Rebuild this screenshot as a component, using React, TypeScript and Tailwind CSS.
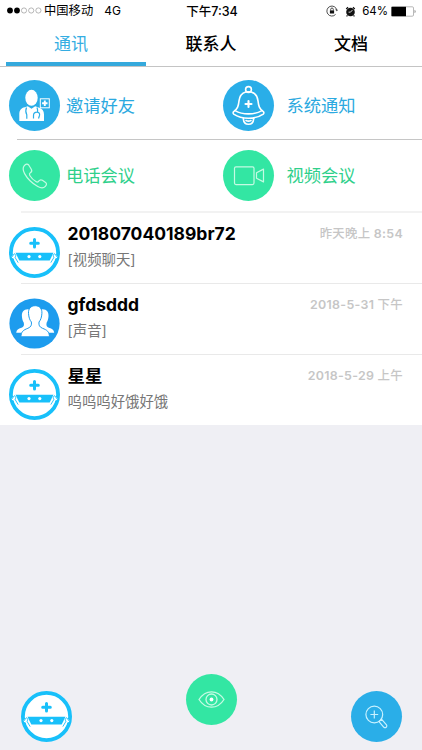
import type { ReactNode } from "react";

const tabs = [
  { label: "通讯", active: true },
  { label: "联系人", active: false },
  { label: "文档", active: false },
];

function DoctorIcon() {
  return (
    <svg viewBox="0 0 51 51" className="size-[51px]" fill="none">
      <ellipse cx="22.500" cy="17.800" rx="6.200" ry="8" fill="#fff" />
      <path
        d="M10.300 41v-6.500c0-4.500 2-6.500 5.500-7.300l3-1 3.700 2.500 3.700-2.500 3.500 1.200c3.500.9 5.300 3.200 5.300 7.200V41z"
        fill="#fff"
      />
      <path
        d="M17.500 27.500c-1 2.500-1 5 .3 7.200v4M28 27.500c.8 1.800.8 3.300.3 5M24.500 38.500v-3c0-2 1.500-3.300 3.500-3.300s3 1.600 2.500 3.300l-1 3"
        stroke="#2aaee8"
        strokeWidth="1.200"
      />
      <rect x="31.300" y="18.800" width="9" height="9" stroke="#fff" strokeWidth="1" />
      <path d="M35.800 20.600v5.400M33.100 23.300h5.400" stroke="#fff" strokeWidth="1.900" />
    </svg>
  );
}

function BellIcon() {
  return (
    <svg
      viewBox="0 0 51 51"
      className="size-[51px]"
      fill="none"
      stroke="#fff"
      strokeWidth="1.600"
      strokeLinejoin="round"
      strokeLinecap="round"
    >
      <circle cx="25.500" cy="9.500" r="2.900" />
      <path d="M22.800 11.900c-4.300 1.200-6.300 4.600-6.800 9-.6 5.300-1.300 7.700-5.300 10.700-.8.600-.8 1.900 0 2.500 4.300 2.900 9.300 4.100 14.800 4.100s10.500-1.200 14.800-4.100c.8-.6.8-1.900 0-2.500-4-3-4.700-5.400-5.300-10.700-.5-4.400-2.500-7.800-6.800-9z" />
      <path d="M12 30.600c4 2.300 8.500 3.300 13.500 3.300s9.500-1 13.500-3.300" />
      <path d="M20.300 38.600c.3 3.700 2.300 5.700 5.200 5.700s4.900-2 5.200-5.700M23 40.500c1.500.7 3.500.7 5 0" />
      <path d="M25.500 21v6M22.500 24h6" strokeWidth="2.100" />
    </svg>
  );
}

function PhoneIcon() {
  return (
    <svg
      viewBox="0 0 51 51"
      className="size-[51px]"
      fill="none"
      stroke="#c5fae3"
      strokeWidth="1.200"
      strokeLinejoin="round"
    >
      <path d="M15.300 15.600c1.400-1.600 3.200-2 4.400-.6l2.600 4.200c.9 1.500.4 2.700-1 3.600-1.100.8-1.100 1.700-.5 2.700 1.600 2.600 3.600 4.600 6.100 6.100 1.100.7 2 .6 2.800-.5 1-1.300 2.300-1.700 3.700-.8l3.200 2.200c1.300.9 1.100 2.400-.3 3.900-1.900 2-4.700 1.700-7.500.1-5.800-3.300-10.200-7.300-13.200-12.900-1.700-3.200-2-6-.3-8z" />
    </svg>
  );
}

function CameraIcon() {
  return (
    <svg
      viewBox="0 0 51 51"
      className="size-[51px]"
      fill="none"
      stroke="#c5fae3"
      strokeWidth="1.200"
      strokeLinejoin="round"
    >
      <rect x="11.500" y="16.800" width="19.500" height="17.800" rx="1.500" />
      <path d="M33.500 22.800l7-3.700v12.800l-7-3.700z" />
    </svg>
  );
}

function MaskIcon() {
  return (
    <svg viewBox="0 0 51 51" className="size-[51px] shrink-0" fill="none">
      <circle cx="25.500" cy="25.500" r="23.600" fill="#fff" stroke="#18c0fa" strokeWidth="3.800" />
      <path d="M25.500 12.500v7.600M21.700 16.300h7.600" stroke="#18c0fa" strokeWidth="3" strokeLinecap="round" />
      <path d="M6.500 25.800h38l-3.800 7.700H10.300z" fill="#18c0fa" />
      <circle cx="20" cy="29.600" r="1.600" fill="#fff" />
      <circle cx="30.800" cy="29.600" r="1.600" fill="#fff" />
      <path d="M3.600 30l2-2.200M5.200 30.500l3 5M47.400 30l-2-2.200M45.800 30.500l-3 5" stroke="#fff" strokeWidth="2.200" strokeLinecap="round" />
      <path
        d="M2.500 30.500l2.800-3.800c1.300.5 1.800 1.600 1.300 2.800M6 30.300l3 5M48.500 30.500l-2.800-3.800c-1.300.5-1.800 1.600-1.300 2.800M45 30.300l-3 5"
        stroke="#18c0fa"
        strokeWidth="0.900"
        strokeLinecap="round"
      />
    </svg>
  );
}

function GroupIcon() {
  return (
    <svg viewBox="0 0 51 51" className="size-[51px] shrink-0">
      <circle cx="25.500" cy="25.500" r="25.100" fill="#1d9cee" />
      <path
        d="M18.800 11.200c-4.300 0-6.200 3-5.900 6.900.2 2.800.7 5 1.900 6.700.5 2.700 0 4-2.300 5-3.300 1.200-4.900 2-5.300 5h18V12z"
        fill="#fff"
      />
      <path
        d="M33.600 11.200c4.300 0 6.200 3 5.900 6.900-.2 2.800-.7 5-1.900 6.700-.5 2.700 0 4 2.300 5 3.300 1.200 4.900 2 5.300 5h-18V12z"
        fill="#fff"
      />
      <path
        d="M26.200 7.700c-4.600 0-7 3.200-6.700 7.600.2 3.600 1.100 6.700 2.900 8.700.4 3.200-.4 5-3.500 6.300-4.600 1.700-6.700 3.300-7 8.500h28.600c-.3-5.200-2.400-6.800-7-8.500-3.100-1.300-3.900-3.100-3.500-6.300 1.800-2 2.700-5.100 2.900-8.700.3-4.400-2.100-7.600-6.700-7.600z"
        fill="#fff"
        stroke="#1d9cee"
        strokeWidth="1"
      />
    </svg>
  );
}

function EyeIcon() {
  return (
    <svg viewBox="0 0 51 51" className="size-[51px]" fill="none" stroke="#c5fae3" strokeWidth="1.300">
      <path d="M13 25.500c3.300-5.200 7.500-7.700 12.500-7.700S34.700 20.300 38 25.500c-3.300 5.200-7.500 7.700-12.500 7.700S16.300 30.700 13 25.500z" />
      <circle cx="25.500" cy="25.500" r="5.500" />
      <circle cx="25.500" cy="25.500" r="1.900" fill="#fff" stroke="none" />
    </svg>
  );
}

function SearchIcon() {
  return (
    <svg viewBox="0 0 51 51" className="size-[51px]" fill="none" stroke="#c8f1ff" strokeWidth="1.200">
      <circle cx="23.300" cy="23.500" r="8.400" />
      <path d="M23.300 19.600v7.800M19.400 23.500h7.800" />
      <path d="M28 30.600l2.700-2.300 4.800 5.600c1.200 1.700-1 3.600-2.600 2.400z" strokeLinejoin="round" />
    </svg>
  );
}

const menu = [
  [
    { label: "邀请好友", icon: <DoctorIcon />, circle: "bg-[#2aaee8]", text: "text-[#2ba9e0]" },
    { label: "系统通知", icon: <BellIcon />, circle: "bg-[#2aaee8]", text: "text-[#2ba9e0]" },
  ],
  [
    { label: "电话会议", icon: <PhoneIcon />, circle: "bg-[#33e6a3]", text: "text-[#2fd08b]" },
    { label: "视频会议", icon: <CameraIcon />, circle: "bg-[#33e6a3]", text: "text-[#2fd08b]" },
  ],
];

const chats = [
  { name: "201807040189br72", message: "[视频聊天]", day: "昨天晚上", clock: "8:54", avatar: <MaskIcon /> },
  { name: "gfdsddd", message: "[声音]", day: "2018-5-31", clock: "下午", avatar: <GroupIcon /> },
  { name: "星星", message: "呜呜呜好饿好饿", day: "2018-5-29", clock: "上午", avatar: <MaskIcon /> },
];

function Circle({ color, children }: { color: string; children: ReactNode }) {
  return <div className={`size-[51px] shrink-0 rounded-full ${color}`}>{children}</div>;
}

function StatusBar() {
  return (
    <div className="grid h-[22px] grid-cols-3 items-center pl-[7px] pr-[5px] text-[12px] leading-none text-black">
      <div className="flex items-center">
        <svg viewBox="0 0 35 7" className="mr-[2px] h-[7px] w-[35px]" fill="none" stroke="#888" strokeWidth="0.600">
          <circle cx="3" cy="3.500" r="2.900" fill="#000" stroke="none" />
          <circle cx="10" cy="3.500" r="2.900" fill="#000" stroke="none" />
          <circle cx="17" cy="3.500" r="2.600" />
          <circle cx="24.200" cy="3.500" r="2.600" />
          <circle cx="31.400" cy="3.500" r="2.600" />
        </svg>
        <span className="whitespace-nowrap pt-px text-[12.300px]">中国移动</span>
        <span className="ml-[11px] pt-px">4G</span>
      </div>
      <div className="pt-[2px] text-center text-[12.500px] font-medium">下午7:34</div>
      <div className="flex items-center justify-end">
        <svg viewBox="0 0 12 12" className="mr-[7px] size-[12px]" fill="none" stroke="#222" strokeWidth="0.800">
          <path d="M10.800 5.200A5 5 0 1 0 9.600 9.400M9.500 4.700l1.300 1.200 1-1.300" />
          <rect x="3.900" y="5.400" width="4.200" height="3.100" fill="#111" stroke="none" />
          <path d="M4.700 5.500V4.300a1.300 1.300 0 0 1 2.600 0v1.200" />
        </svg>
        <svg viewBox="0 0 12 12" className="mr-[6px] size-[11px]" fill="none">
          <circle cx="6" cy="6.500" r="4.700" fill="#111" />
          <path d="M1.300 3.200l2-1.800M10.700 3.200l-2-1.800M2.700 10.200l-1 1.200M9.300 10.200l1 1.200" stroke="#111" strokeWidth="1.300" />
          <path d="M8.200 4.300L6 6.700H3.900" stroke="#fff" strokeWidth="0.900" />
        </svg>
        <span className="mr-[3px] pt-px text-[11.500px]">64%</span>
        <svg viewBox="0 0 26 11" className="h-[11px] w-[26px]">
          <rect x="0.500" y="0.800" width="22" height="9.400" rx="1.200" fill="#fff" stroke="#999" strokeWidth="0.700" />
          <rect x="0.500" y="0.800" width="14.500" height="9.400" fill="#000" />
          <path d="M23.600 3.800c1.300.4 1.300 3 0 3.400z" fill="#777" />
        </svg>
      </div>
    </div>
  );
}

export default function App() {
  return (
    <div className="flex h-[750px] w-[422px] flex-col overflow-hidden bg-[#efeff4] font-[Inter,'Noto_Sans_CJK_SC',sans-serif]">
      <div className="bg-white">
        <StatusBar />

        {/* Tabs */}
        <div className="flex h-[45px] border-b border-[#c4c4c4] pl-[6px]">
          {tabs.map((tab) => (
            <div
              key={tab.label}
              className={`flex w-[140px] shrink-0 items-center justify-center border-b-[4px] pt-[6px] text-[17px] ${
                tab.active ? "border-[#35a9dc] pr-[10px] text-[#35ade2]" : "border-transparent pr-[10px] font-medium text-black"
              }`}
            >
              {tab.label}
            </div>
          ))}
        </div>

        {/* Shortcuts */}
        {menu.map((row, i) => (
          <div key={i}>
            <div className={`flex pl-[8.500px] ${i === 0 ? "h-[72px] pt-[13px]" : "h-[71px] pt-[10px]"}`}>
              {row.map((item, j) => (
                <div key={item.label} className={`flex h-[51px] items-center ${j === 0 ? "w-[214.500px] gap-[6.500px]" : "gap-[12.500px]"}`}>
                  <Circle color={item.circle}>{item.icon}</Circle>
                  <span className={`text-[17.300px] ${item.text}`}>{item.label}</span>
                </div>
              ))}
            </div>
            <div className={i === 0 ? "ml-[17px] h-px bg-[#c6c6c6]" : "ml-[21px] h-[2px] bg-[#f2f2f2]"} />
          </div>
        ))}

        {/* Conversations */}
        {chats.map((chat, i) => (
          <div key={chat.name}>
            {i > 0 && <div className="ml-[21px] h-px bg-[#e9e9e9]" />}
            <div className="flex h-[70px] pl-[8.500px] pr-[19px] pt-[13.500px]">
              {chat.avatar}
              <div className="ml-[8px] flex-1">
                <div className="-mt-[5.500px] h-[26px] text-[17.500px] font-bold leading-[26px] text-black">{chat.name}</div>
                <div className="h-[26px] text-[14.400px] leading-[26px] text-[#777]">{chat.message}</div>
              </div>
              <div className="-mt-[2.500px] h-[20px] text-[12.400px] font-semibold leading-[20px] tracking-[0.300px] text-[#c6c6c6]">
                <span className={i === 0 ? "font-medium" : ""}>{chat.day}</span>{" "}
                <span className={i === 0 ? "" : "font-medium"}>{chat.clock}</span>
              </div>
            </div>
          </div>
        ))}
      </div>

      {/* Floating actions */}
      <div className="mt-auto flex items-end justify-between pb-[8.500px] pl-[20.500px] pr-[20.500px]">
        <MaskIcon />
        <div className="mb-[16.500px]">
          <Circle color="bg-[#33e6a3]">
            <EyeIcon />
          </Circle>
        </div>
        <Circle color="bg-[#2aaee8]">
          <SearchIcon />
        </Circle>
      </div>
    </div>
  );
}
